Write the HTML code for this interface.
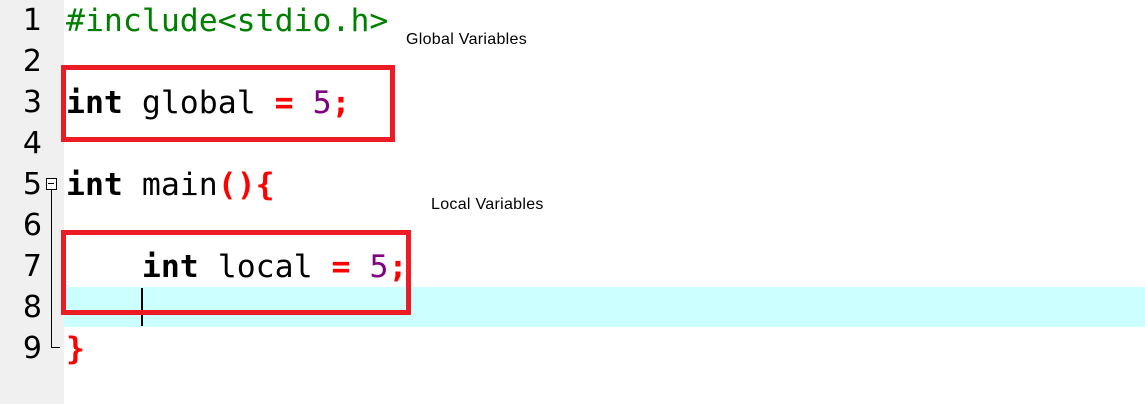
<!DOCTYPE html>
<html><head><style>
body{margin:0;width:1145px;height:404px;background:#fff;position:relative;overflow:hidden}
.g{position:absolute;left:0;top:0;width:64px;height:404px;background:#f0f0f0}
.hl{position:absolute;left:64px;top:287px;width:1081px;height:40px;background:#ccffff}
.ln{position:absolute;left:0;width:42px;text-align:right;font:30px "DejaVu Sans","Liberation Sans",sans-serif;color:#000;line-height:42px}
.c{position:absolute;left:66px;font:31.5px "DejaVu Sans Mono","Liberation Mono",monospace;line-height:42px;white-space:pre;color:#000}
b{font-weight:bold}
.r{color:#f00;font-weight:bold}.p{color:#800080}.gr{color:#008000}
.box{position:absolute;border:5px solid #ed1c24;box-sizing:border-box}
.lab{position:absolute;font:16px "Liberation Sans",sans-serif;color:#000;letter-spacing:0.3px}
</style></head><body>
<div class="g"></div><div class="hl"></div>
<div class="ln" style="top:0">1</div><div class="ln" style="top:41px">2</div><div class="ln" style="top:82px">3</div><div class="ln" style="top:123px">4</div><div class="ln" style="top:164px">5</div><div class="ln" style="top:205px">6</div><div class="ln" style="top:246px">7</div><div class="ln" style="top:287px">8</div><div class="ln" style="top:328px">9</div>
<div style="position:absolute;left:46px;top:178px;width:9px;height:10px;border:1px solid #000;background:#fff"></div>
<div style="position:absolute;left:48px;top:183px;width:6px;height:1px;background:#000"></div>
<div style="position:absolute;left:51px;top:190px;width:1px;height:158px;background:#000"></div>
<div style="position:absolute;left:51px;top:347px;width:9px;height:1px;background:#000"></div>
<div class="c gr" style="top:0">#include&lt;stdio.h&gt;</div>
<div class="c" style="top:82px"><b>int</b> global <span class="r">=</span> <span class="p">5</span><span class="r">;</span></div>
<div class="c" style="top:164px"><b>int</b> main<span class="r">(){</span></div>
<div class="c" style="top:246px">    <b>int</b> local <span class="r">=</span> <span class="p">5</span><span class="r">;</span></div>
<div class="c r" style="top:328px">}</div>
<div style="position:absolute;left:141px;top:288px;width:2px;height:38px;background:#000"></div>
<div class="box" style="left:61px;top:65px;width:334px;height:77px"></div>
<div class="box" style="left:61px;top:230px;width:350px;height:85px"></div>
<div class="lab" style="left:406px;top:31px">Global Variables</div>
<div class="lab" style="left:431px;top:196px">Local Variables</div>
</body></html>
